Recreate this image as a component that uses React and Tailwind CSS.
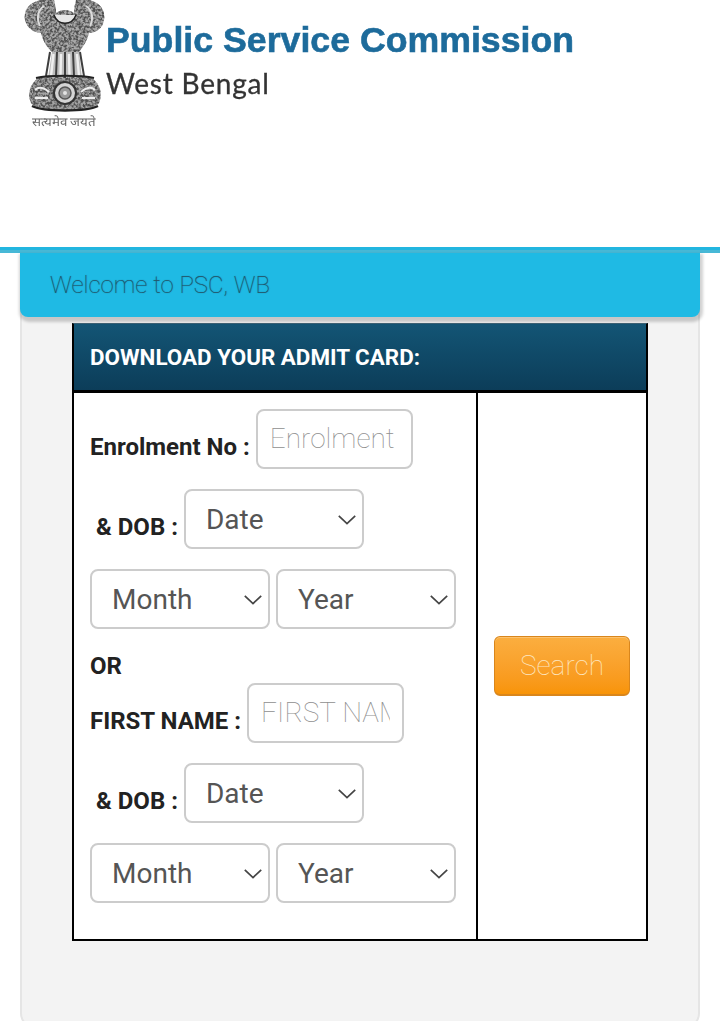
import React from "react";

const MANE =
  "M1 20 C-1 9 7 1 18 0 L30 0 C31 4 32 8 32 13 C37 9 45 9 50 13 C50 8 51 4 52 0 L64 0 C74 1 82 9 80 20 C79 28 72 33 65 33 C63 41 59 47 55 52 L28 52 C23 47 19 41 17 33 C10 33 3 28 1 20 Z";
const BASE =
  "M14 78 C24 76 58 76 68 78 C76 84 79 94 75 103 C71 108 60 110 41 110 C22 110 11 108 7 103 C3 94 6 84 14 78 Z";

function Emblem() {
  return (
    <svg width="82" height="130" viewBox="0 0 82 130" className="shrink-0 blur-[0.6px]">
      <defs>
        <filter id="grain" x="0" y="0" width="100%" height="100%">
          <feTurbulence type="fractalNoise" baseFrequency="0.42" numOctaves="2" seed="7" />
          <feColorMatrix values="0 0 0 0 0.08  0 0 0 0 0.08  0 0 0 0 0.08  3.4 0 0 0 -1.25" />
          <feComposite in2="SourceGraphic" operator="in" />
        </filter>
      </defs>
      <path d={MANE} fill="#a9a9a9" />
      <path d={BASE} fill="#a4a4a4" />
      <path d="M28 52 L55 52 L58 78 L24 78 Z" fill="#bdbdbd" />
      <g filter="url(#grain)">
        <path d={MANE} fill="#000" />
        <path d={BASE} fill="#000" />
      </g>
      <path d="M30 15 C34 26 48 26 52 15" fill="#e6e6e6" stroke="#222" strokeWidth="1.5" />
      <path d="M20 6 C14 10 12 18 16 26 M62 6 C68 10 70 18 66 26" fill="none" stroke="#dcdcdc" strokeWidth="2" />
      <path d="M26 52 L22 76 M33 52 L32 76 M41 52 L41 78 M49 52 L50 76 M56 52 L60 76" fill="none" stroke="#3f3f3f" strokeWidth="2" />
      <path d="M29.5 54 L27 76 M37 54 L36.5 76 M45 54 L45.5 76 M53 54 L55 76" fill="none" stroke="#efefef" strokeWidth="2.4" />
      <path d="M12 78 C24 75 58 75 70 78" fill="none" stroke="#222" strokeWidth="2" />
      <circle cx="41" cy="93" r="11" fill="#d4d4d4" stroke="#333" strokeWidth="2" />
      <circle cx="41" cy="93" r="6" fill="#9a9a9a" stroke="#555" strokeWidth="1.5" />
      <circle cx="41" cy="93" r="2" fill="#e2e2e2" />
      <path d="M11 90 C15 86 21 88 25 92 M57 92 C61 88 67 86 71 90 M11 98 H24 M58 98 H71" fill="none" stroke="#ececec" strokeWidth="2" />
      <path d="M8 106 C20 112 62 112 74 106" fill="none" stroke="#222" strokeWidth="2.5" />
      <text x="8" y="126" fontSize="12" fontFamily="'Noto Sans CJK SC','DejaVu Sans',sans-serif" fill="#666" textLength="64" lengthAdjust="spacingAndGlyphs">सत्यमेव जयते</text>
    </svg>
  );
}

function Chevron() {
  return (
    <svg width="18" height="10" viewBox="0 0 18 10" className="absolute right-[8px] top-[26px] pointer-events-none">
      <path d="M0.8 0.8 L9 8.6 L17.2 0.8" fill="none" stroke="#444" strokeWidth="1.7" />
    </svg>
  );
}

function Sel({ label }) {
  return (
    <div className="relative w-[180px] h-[60px] shrink-0">
      <select
        defaultValue={label}
        className="w-full h-full appearance-none bg-white border-2 border-[#cccccc] rounded-lg pl-5 pt-[2px] text-[28px] text-[#555555] font-['Roboto',sans-serif] outline-none"
      >
        <option>{label}</option>
      </select>
      <Chevron />
    </div>
  );
}

function Field({ placeholder }) {
  return (
    <input
      placeholder={placeholder}
      className="w-[157px] h-[60px] shrink-0 bg-white border-2 border-[#cccccc] rounded-lg px-3 pb-[2px] text-[28px] font-thin font-['Roboto',sans-serif] outline-none placeholder:text-[#8f8f8f] placeholder:opacity-100"
    />
  );
}

function Label({ children, className = "" }) {
  return <span className={"text-2xl font-bold text-[#222222] pt-4 whitespace-pre " + className}>{children}</span>;
}

function Dob() {
  return (
    <>
      <div className="flex items-center gap-[6px] mt-5">
        <Label className="pl-[6px]">& DOB :</Label>
        <Sel label="Date" />
      </div>
      <div className="flex gap-[6px] mt-5">
        <Sel label="Month" />
        <Sel label="Year" />
      </div>
    </>
  );
}

export default function App() {
  return (
    <div className="h-[1021px] overflow-hidden bg-white font-['Roboto',sans-serif]">
      <header className="h-[250px] border-b-[3px] border-[#22b6e0] flex items-start pl-6">
        <Emblem />
        <div className="blur-[0.5px]">
          <div className="text-[35.7px] leading-none font-bold text-[#1d6b9b] [-webkit-text-stroke:0.6px_#1d6b9b] font-['Liberation_Sans',sans-serif] mt-[23px] whitespace-nowrap">
            Public Service Commission
          </div>
          <div className="text-[28px] leading-none tracking-[0.8px] text-[#333333] [-webkit-text-stroke:0.3px_#333333] font-['Lato',sans-serif] mt-[10px] whitespace-nowrap">
            West Bengal
          </div>
        </div>
      </header>
      <div className="h-[3px] bg-[#47b8d6]" />
      <main className="mx-5 h-[776px] bg-[#f3f3f3] border-x-2 border-b-2 border-[#e5e5e5] rounded-b-2xl">
        <div className="relative -mx-[2px] h-16 bg-[#1fbae4] rounded-b-lg flex items-center pl-[30px] shadow-[1px_3px_3px_2px_rgba(0,0,0,0.18)]">
          <span className="text-2xl font-thin text-[#24586c] [text-shadow:0_0_1px_rgba(0,30,50,0.55)]">Welcome to PSC, WB</span>
        </div>
        <table className="mt-[6px] ml-[50px] w-[576px] border-separate border-spacing-0 bg-white table-fixed">
          <colgroup>
            <col className="w-[406px]" />
            <col className="w-[170px]" />
          </colgroup>
          <thead>
            <tr>
              <th
                colSpan={2}
                className="h-[70px] text-left pl-4 pt-[2px] border-x-2 border-b-[3px] border-black border-t border-t-[#3d6376] bg-gradient-to-b from-[#135575] to-[#0c3d59] text-white text-[22.4px] font-bold"
              >
                DOWNLOAD YOUR ADMIT CARD:
              </th>
            </tr>
          </thead>
          <tbody>
            <tr>
              <td className="h-[548px] align-top pl-4 pt-4 border-l-2 border-r-2 border-b-2 border-black">
                <div className="flex items-center gap-[6px]">
                  <Label>Enrolment No :</Label>
                  <Field placeholder="Enrolment" />
                </div>
                <Dob />
                <div className="text-2xl font-bold text-[#222222] mt-[21px] leading-8">OR</div>
                <div className="flex items-center gap-[6px] mt-[1px]">
                  <Label>FIRST NAME :</Label>
                  <Field placeholder="FIRST NAME" />
                </div>
                <Dob />
              </td>
              <td className="align-middle text-center border-r-2 border-b-2 border-black">
                <button className="w-[136px] h-[60px] rounded-md border border-[#d9861c] border-b-2 bg-gradient-to-b from-[#fbae3f] to-[#f89406] text-[#fde6c0] text-[28px] font-thin shadow-[inset_0_1px_0_rgba(255,255,255,0.25)]">
                  Search
                </button>
              </td>
            </tr>
          </tbody>
        </table>
      </main>
    </div>
  );
}
